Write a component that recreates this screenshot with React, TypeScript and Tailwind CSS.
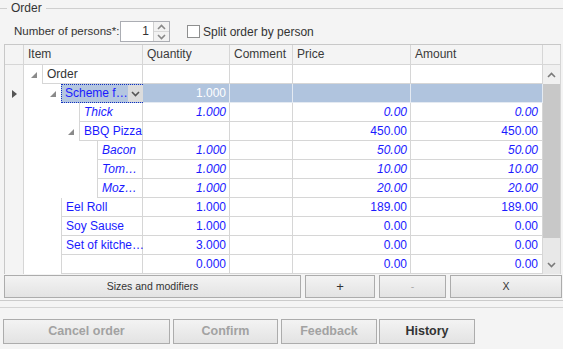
import React from 'react'

interface Row {
  level: number
  name: string
  expander?: boolean
  italic?: boolean
  qty?: string
  price?: string
  amount?: string
  selected?: boolean
}

const rows: Row[] = [
  { level: 0, name: 'Order', expander: true },
  { level: 1, name: 'Scheme f…', expander: true, qty: '1.000', selected: true },
  { level: 2, name: 'Thick', italic: true, qty: '1.000', price: '0.00', amount: '0.00' },
  { level: 2, name: 'BBQ Pizza', expander: true, price: '450.00', amount: '450.00' },
  { level: 3, name: 'Bacon', italic: true, qty: '1.000', price: '50.00', amount: '50.00' },
  { level: 3, name: 'Tom…', italic: true, qty: '1.000', price: '10.00', amount: '10.00' },
  { level: 3, name: 'Moz…', italic: true, qty: '1.000', price: '20.00', amount: '20.00' },
  { level: 1, name: 'Eel Roll', qty: '1.000', price: '189.00', amount: '189.00' },
  { level: 1, name: 'Soy Sause', qty: '1.000', price: '0.00', amount: '0.00' },
  { level: 1, name: 'Set of kitche…', qty: '3.000', price: '0.00', amount: '0.00' },
  { level: 1, name: '', qty: '0.000', price: '0.00', amount: '0.00' },
]

const indents = ['w-[18px]', 'w-[37px]', 'w-[55px]', 'w-[73px]']

function Expander() {
  return (
    <svg width="6" height="6" viewBox="0 0 6 6">
      <polygon points="6,0 6,6 0,6" fill="#8a8a8a" />
    </svg>
  )
}

function Chevron({ up, color = '#707070' }: { up?: boolean; color?: string }) {
  return (
    <svg width="9" height="6" viewBox="0 0 9 6">
      <polyline
        points={up ? '1,5 4.5,1.5 8,5' : '1,1 4.5,4.5 8,1'}
        fill="none"
        stroke={color}
        strokeWidth="1.6"
      />
    </svg>
  )
}

function GridRow({ row }: { row: Row }) {
  const textColor = row.level === 0 ? 'text-[#333]' : row.italic ? 'italic text-[#1a1aff]' : 'text-[#1a1aff]'
  const sel = row.selected
  const cell = sel
    ? 'bg-[#b0c4de] border-b border-r border-[#e4eaf2]'
    : 'bg-white border-b border-r border-[#d6d6d6]'
  return (
    <div className="flex h-[19px]">
      <div className="w-[19px] shrink-0 bg-[#f4f4f4] border-r border-[#d6d6d6] flex items-center justify-center">
        {sel && (
          <svg width="5" height="8" viewBox="0 0 5 8">
            <polygon points="0,0 5,4 0,8" fill="#555" />
          </svg>
        )}
      </div>
      <div className="w-[119px] shrink-0 flex bg-white border-r border-[#d6d6d6]">
        <div className={`${indents[row.level]} shrink-0 flex items-center justify-end pr-[5px]`}>
          {row.expander && <Expander />}
        </div>
        {sel ? (
          <div className="flex-1 flex bg-[#b4c6e0] border border-dotted border-[#1030c0]">
            <span className="flex-1 pl-[3px] leading-[17px] text-[#1a1aff] whitespace-nowrap">{row.name}</span>
            <div className="w-[16px] bg-[#dcdcdc] flex items-center justify-center">
              <Chevron color="#555" />
            </div>
          </div>
        ) : (
          <div className={`flex-1 border-l border-b border-[#d6d6d6] pl-[4px] leading-[18px] whitespace-nowrap ${textColor}`}>
            {row.name}
          </div>
        )}
      </div>
      <div className={`w-[87px] shrink-0 ${cell} text-right pr-[3px] leading-[18px] ${sel ? 'text-white' : textColor}`}>
        {row.qty}
      </div>
      <div className={`w-[63px] shrink-0 ${cell}`} />
      <div className={`w-[118px] shrink-0 ${cell} text-right pr-[3px] leading-[18px] ${textColor}`}>
        {row.price}
      </div>
      <div className={`w-[132px] shrink-0 ${cell} text-right pr-[4px] leading-[18px] ${textColor}`}>
        {row.amount}
      </div>
    </div>
  )
}

function Btn({ children, className = '' }: { children: React.ReactNode; className?: string }) {
  return (
    <div
      className={`flex items-center justify-center border border-[#acacac] bg-gradient-to-b from-[#f3f3f3] to-[#e3e3e3] ${className}`}
    >
      {children}
    </div>
  )
}

export default function App() {
  return (
    <div className="w-[563px] h-[349px] overflow-hidden bg-[#f4f4f4] text-[#333] text-[11px] font-['Liberation_Sans',Arial,sans-serif]">
      {/* Group header */}
      <div className="flex items-center h-[16px]">
        <div className="w-[7px] h-px bg-[#cfcfcf]" />
        <span className="px-[4px] text-[12px] text-[#333]">Order</span>
        <div className="flex-1 h-px bg-[#cfcfcf]" />
      </div>

      {/* Persons */}
      <div className="flex items-center h-[21px] mt-[5px] pl-[14px] text-[12px]">
        <span className="w-[106px] whitespace-nowrap text-[11.5px]">Number of persons*:</span>
        <div className="w-[50px] h-[21px] flex border border-[#abadb3] bg-white">
          <span className="flex-1 text-right pr-[4px] leading-[19px]">1</span>
          <div className="w-[16px] flex flex-col border-l border-[#d0d0d0] bg-[#f2f2f2]">
            <div className="flex-1 flex items-center justify-center border-b border-[#d8d8d8]">
              <Chevron up color="#888" />
            </div>
            <div className="flex-1 flex items-center justify-center">
              <Chevron color="#888" />
            </div>
          </div>
        </div>
        <div className="ml-[17px] w-[13px] h-[13px] border border-[#8e8f8f] bg-white" />
        <span className="ml-[3px] whitespace-nowrap">Split order by person</span>
      </div>

      {/* Grid */}
      <div className="mt-[2px] ml-[4px] w-[557px] border-l border-t border-[#c8c8c8] flex flex-col">
        <div className="flex h-[20px] bg-[#f4f4f4] border-b border-[#d6d6d6] text-[12px] text-[#3a3a3a]">
          <div className="w-[19px] border-r border-[#d6d6d6]" />
          <div className="w-[119px] border-r border-[#d6d6d6] pl-[4px] leading-[19px]">Item</div>
          <div className="w-[87px] border-r border-[#d6d6d6] pl-[4px] leading-[19px]">Quantity</div>
          <div className="w-[63px] border-r border-[#d6d6d6] pl-[4px] leading-[19px]">Comment</div>
          <div className="w-[118px] border-r border-[#d6d6d6] pl-[4px] leading-[19px]">Price</div>
          <div className="w-[132px] border-r border-[#d6d6d6] pl-[4px] leading-[19px]">Amount</div>
          <div className="w-[18px] border-r border-[#d6d6d6]" />
        </div>
        <div className="flex text-[12px]">
          <div className="flex flex-col">
            {rows.map((r, i) => (
              <GridRow key={i} row={r} />
            ))}
          </div>
          <div className="w-[18px] flex flex-col bg-[#e8e8e8] border-r border-[#d6d6d6]">
            <div className="h-[19px] bg-[#f0f0f0] flex items-center justify-center">
              <Chevron up color="#7a7a7a" />
            </div>
            <div className="h-[154px] bg-[#c8c8c8]" />
            <div className="flex-1" />
            <div className="h-[19px] flex items-center justify-center">
              <Chevron color="#7a7a7a" />
            </div>
          </div>
        </div>
      </div>

      {/* Grid buttons */}
      <div className="flex pl-[4px] mt-px h-[23px] text-[10.5px] text-[#333]">
        <Btn className="w-[297px]">Sizes and modifiers</Btn>
        <Btn className="w-[70px] ml-[4px] text-[13px]">+</Btn>
        <Btn className="w-[67px] ml-[4px] text-[#aaa]">-</Btn>
        <Btn className="w-[112px] ml-[4px]">X</Btn>
      </div>

      <div className="mt-[2px] h-px bg-[#cbcbcb]" />
      <div className="mt-[6px] h-px bg-[#d4d4d4]" />

      {/* Bottom buttons */}
      <div className="flex pl-[3px] mt-[11px] h-[25px] text-[12.5px] font-bold">
        <Btn className="w-[167px] text-[#a2a2a2]">Cancel order</Btn>
        <Btn className="w-[105px] ml-[3px] text-[#a2a2a2]">Confirm</Btn>
        <Btn className="w-[96px] ml-[3px] text-[#a2a2a2]">Feedback</Btn>
        <Btn className="w-[96px] ml-[2px] text-[#333]">History</Btn>
      </div>
    </div>
  )
}
